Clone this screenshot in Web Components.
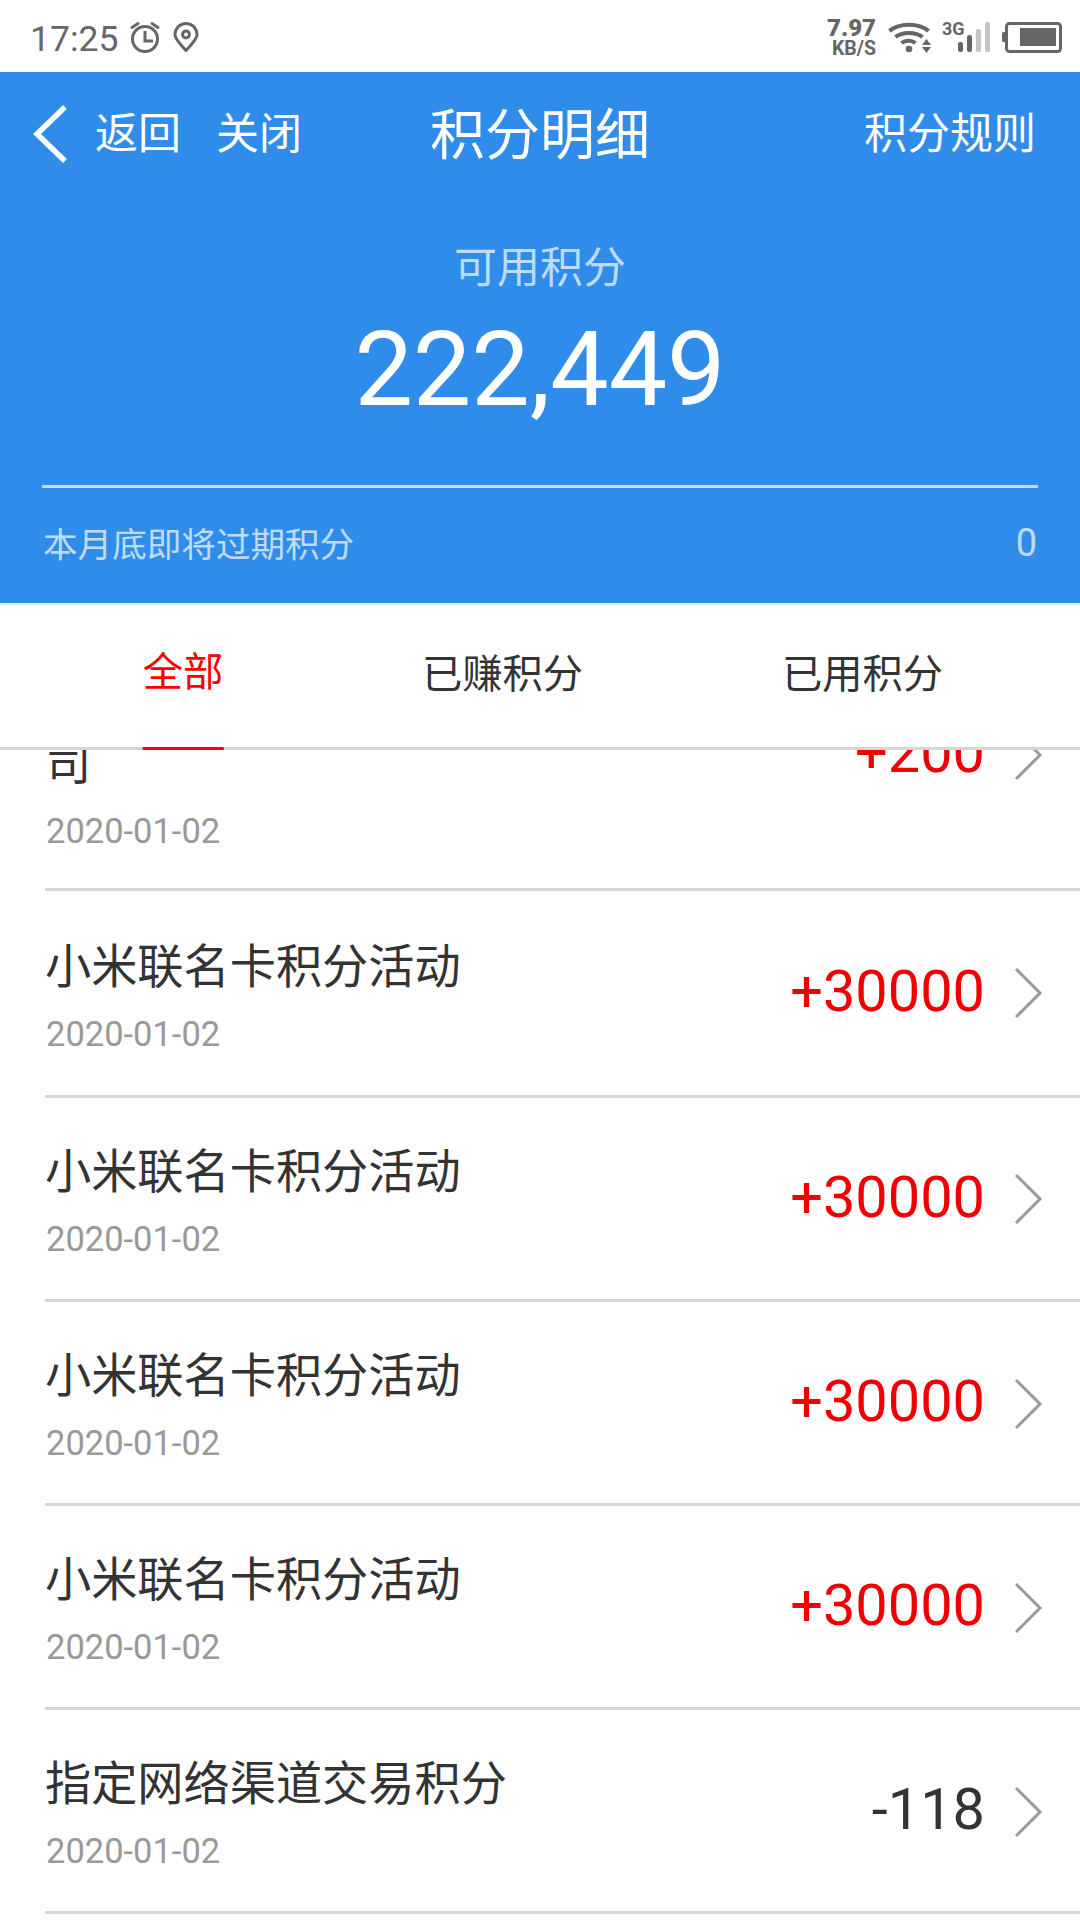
<!DOCTYPE html>
<html lang="zh"><head><meta charset="utf-8"><style>
html,body{margin:0;padding:0;background:#fff}
body{width:1080px;height:1920px;overflow:hidden;font-family:Roboto,"Noto Sans CJK SC",sans-serif}
</style></head><body>
<points-page></points-page>
<script>
const F='Roboto,"Noto Sans CJK SC",sans-serif';
class StatusBar extends HTMLElement{constructor(){super();this.attachShadow({mode:'open'}).innerHTML=`<style>
:host{display:flex;align-items:center;justify-content:space-between;height:72px;background:#fff;color:#666;padding:2px 18px 0 30px;box-sizing:border-box;font-family:${F}}
.l,.r{display:flex;align-items:center}
.t{font-size:35.5px;line-height:42px;margin-right:12px;padding-top:3px}
.sp{display:flex;flex-direction:column;align-items:flex-end;font-weight:700;margin-right:12px;width:50px}
.sp b{font-size:24px;line-height:22px}.sp i{font-style:normal;font-size:19.5px;line-height:16px;margin-top:2px}
.sig{position:relative;width:48px;height:32px;margin-right:12px}
.sig span{position:absolute;left:0;top:-2px;font-weight:700;font-size:18px;line-height:20px}
svg{display:block}
</style><div class="l"><span class="t">17:25</span>
<svg width="30" height="32" viewBox="0 0 30 32" style="margin-right:13px"><g fill="none" stroke="#666" stroke-width="3"><circle cx="15" cy="18" r="12.5"/><path d="M15 10v10h8"/><path d="M2 6.500l6-4M28 6.500l-6-4" stroke-linecap="round"/></g></svg>
<svg width="26" height="32" viewBox="0 0 26 32"><g fill="none" stroke="#666" stroke-width="3"><path d="M13 29.500C7 22.500 2 18.500 2 13.500a11 11 0 0 1 22 0c0 5-5 9-11 16z" stroke-linejoin="round"/><circle cx="13" cy="13.500" r="3.400"/></g></svg></div>
<div class="r"><div class="sp"><b>7.97</b><i>KB/S</i></div>
<svg width="44" height="32" viewBox="0 0 44 32" style="margin-right:10px"><g fill="none" stroke="#666" stroke-width="4"><path d="M1.500 10C11 1.500 31 1.500 40.500 10"/><path d="M7.500 16C14 10.500 28 10.500 34.500 16"/><path d="M13.500 22c4-3 10-3 14 0"/></g><circle cx="21" cy="28" r="3.300" fill="#666"/><path d="M34 24h9l-4.500-6zM34 26h9l-4.500 6z" fill="#666"/></svg>
<div class="sig"><span>3G</span><svg width="48" height="32" viewBox="0 0 48 32"><rect x="16" y="21" width="5" height="10" rx="2" fill="#666"/><rect x="25" y="14" width="5" height="17" rx="2" fill="#666"/><rect x="34" y="8" width="5" height="23" rx="2" fill="#c4c4c4"/><rect x="43" y="1" width="5" height="30" rx="2" fill="#c4c4c4"/></svg></div>
<svg width="60" height="32" viewBox="0 0 60 32"><rect x="0" y="11" width="4" height="10" rx="1.500" fill="#666"/><rect x="4.500" y="2.500" width="54" height="28" rx="3" fill="none" stroke="#666" stroke-width="3"/><rect x="18" y="7" width="36" height="18" fill="#666"/></svg></div>`}}
class NavBar extends HTMLElement{constructor(){super();this.attachShadow({mode:'open'}).innerHTML=`<style>
:host{display:grid;grid-template-columns:1fr auto 1fr;align-items:center;height:124px;color:#fff;font-family:${F};line-height:60px}
.l{display:flex;align-items:center;font-size:43px;padding-left:29px}
.l svg{margin-right:26px}.l span+span{margin-left:35px}
.c{font-size:55px;text-align:center;padding-top:2px}
.r{font-size:43px;text-align:right;padding-right:44px}
</style><div class="l"><svg width="40" height="62" viewBox="0 0 40 62"><path d="M36 4L8 31l28 27" fill="none" stroke="#fff" stroke-width="5.500"/></svg><span>返回</span><span>关闭</span></div><div class="c">积分明细</div><div class="r">积分规则</div>`}}
class PointsHeader extends HTMLElement{constructor(){super();this.attachShadow({mode:'open'}).innerHTML=`<style>
:host{display:block;background:#308ceb;height:531px;color:#fff;font-family:${F}}
.lab{text-align:center;font-size:43px;line-height:50px;margin-top:47px;color:rgba(255,255,255,.7)}
.n{text-align:center;font-size:104px;line-height:116px;margin-top:19px}
.line{height:3px;background:rgba(255,255,255,.72);margin:57px 42px 0}
.e{display:flex;justify-content:space-between;align-items:center;margin:30px 43px 0;font-size:34.600px;line-height:50px;color:rgba(255,255,255,.7)}
.z{font-size:38px;padding-bottom:4px}
</style><nav-bar></nav-bar><div class="lab">可用积分</div><div class="n">222,449</div><div class="line"></div><div class="e"><span>本月底即将过期积分</span><span class="z">0</span></div>`}}
class TabBar extends HTMLElement{constructor(){super();this.attachShadow({mode:'open'}).innerHTML=`<style>
:host{display:block;position:relative;z-index:1;height:147px;box-sizing:border-box;background:#fff;border-top:3px solid #eee;border-bottom:3px solid #d6d6d6;font-family:${F};font-size:40.300px;color:#333}
.t{position:absolute;top:0;bottom:-3px;display:flex;align-items:center;transform:translateX(-50%);padding-bottom:16px;box-sizing:border-box;white-space:nowrap}
.a{color:#f00;border-bottom:3px solid #f00}
</style><div class="t a" style="left:183px">全部</div><div class="t" style="left:502.500px">已赚积分</div><div class="t" style="left:862.500px">已用积分</div>`}}
class PointRow extends HTMLElement{
connectedCallback(){if(this.shadowRoot)return;const neg=this.hasAttribute('neg');this.attachShadow({mode:'open'}).innerHTML=`<style>
:host{display:block;height:204px;box-sizing:border-box;margin-left:45px;border-bottom:3px solid #d6d6d6;font-family:${F}}
.w{display:flex;align-items:center;height:100%;padding-right:37px;box-sizing:border-box}
.m{flex:1;min-width:0;padding-top:9px;margin-top:var(--mt,-4px)}
.h{font-size:46.200px;line-height:60px;color:#333;margin-bottom:16px;white-space:nowrap}
.d{font-size:34.500px;line-height:42px;color:#999;margin-left:1px}
.v{font-size:57.700px;color:${neg?'#333':'#f00000'};margin-right:30px;padding-bottom:4px}
svg{display:block;margin-top:var(--cm,3px)}
</style><div class="w"><div class="m"><div class="h">${this.getAttribute('label')}</div><div class="d">${this.getAttribute('date')}</div></div><div class="v">${this.getAttribute('value')}</div><svg width="28" height="52" viewBox="0 0 28 52"><path d="M1 2l24 24L1 50" fill="none" stroke="#999" stroke-width="3"/></svg></div>`}}
class PointsPage extends HTMLElement{constructor(){super();const D='2020-01-02',M='小米联名卡积分活动';const rows=[['&nbsp;<br>司',"+200",0,'height:272px;--mt:10px'],[M,'+30000',0,'height:207px;--cm:0px'],[M,'+30000',0,'--cm:0px'],[M,'+30000'],[M,'+30000'],['指定网络渠道交易积分','-118',1]];
this.attachShadow({mode:'open'}).innerHTML=`<style>
:host{display:block;height:1920px;overflow:hidden}
.list{margin-top:-131px}
</style><status-bar></status-bar><points-header></points-header><tab-bar></tab-bar><div class="list">${rows.map(r=>`<point-row label="${r[0]}" date="${D}" value="${r[1]}" style="${r[3]||''}" ${r[2]?'neg':''}></point-row>`).join('')}</div>`}}
customElements.define('status-bar',StatusBar);customElements.define('nav-bar',NavBar);customElements.define('points-header',PointsHeader);customElements.define('tab-bar',TabBar);customElements.define('point-row',PointRow);customElements.define('points-page',PointsPage);
</script></body></html>
